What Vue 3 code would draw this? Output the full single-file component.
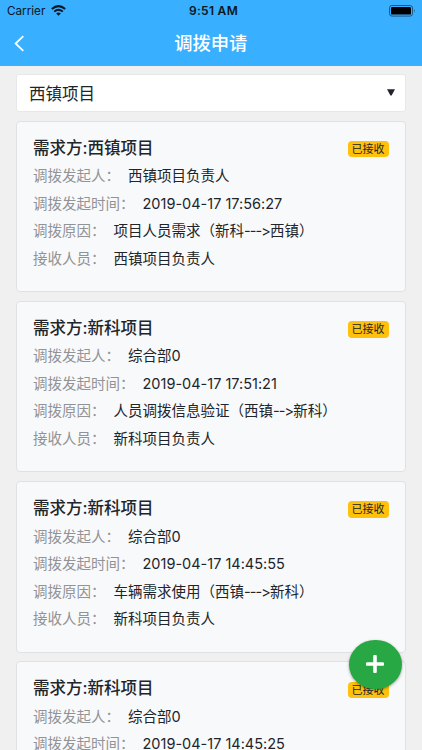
<script setup>
const cards = [
  { party: '西镇项目', rows: [['调拨发起人', '西镇项目负责人'], ['调拨发起时间', '2019-04-17 17:56:27'], ['调拨原因', '项目人员需求（新科--->西镇）'], ['接收人员', '西镇项目负责人']] },
  { party: '新科项目', rows: [['调拨发起人', '综合部0'], ['调拨发起时间', '2019-04-17 17:51:21'], ['调拨原因', '人员调拨信息验证（西镇-->新科）'], ['接收人员', '新科项目负责人']] },
  { party: '新科项目', rows: [['调拨发起人', '综合部0'], ['调拨发起时间', '2019-04-17 14:45:55'], ['调拨原因', '车辆需求使用（西镇--->新科）'], ['接收人员', '新科项目负责人']] },
  { party: '新科项目', rows: [['调拨发起人', '综合部0'], ['调拨发起时间', '2019-04-17 14:45:25']] },
]

// Splits a value so that its "-->" arrow can be set tighter than the rest.
const parts = (text) => text.split(/(-+>)/)
</script>

<template>
  <div class="screen" lang="zh-CN">
    <header class="top">
      <div class="status">
        <div class="carrier">
          <span>Carrier</span>
          <svg class="wifi" viewBox="0 0 15 11">
            <path d="M.8 4.1Q7.5-1.9 14.2 4.1" fill="none" stroke="#0b1722" stroke-width="2" />
            <path d="M3.2 6.6Q7.5 2.7 11.8 6.6" fill="none" stroke="#0b1722" stroke-width="1.9" />
            <path d="M5.2 8.4Q7.5 6.5 9.8 8.4L7.5 10.8Z" fill="#0b1722" />
          </svg>
        </div>
        <div class="clock">9:51 AM</div>
        <svg class="battery" viewBox="0 0 27 12">
          <rect x=".5" y=".5" width="23" height="10.6" rx="2.4" fill="none" stroke="#1d5680" />
          <rect x="2" y="2" width="20" height="7.6" rx="1.2" fill="#000" />
          <path d="M25 4.1Q26.6 5.8 25 7.5Z" fill="#1d5680" />
        </svg>
      </div>
      <div class="nav">
        <svg class="back" viewBox="0 0 11 17"><path d="M9.3 1.2 1.6 8.5 9.3 15.8" fill="none" stroke="#fff" stroke-width="1.8" /></svg>
        <h1>调拨申请</h1>
      </div>
    </header>
    <main>
      <div class="select">
        <span>西镇项目</span>
        <svg class="arrow" viewBox="0 0 8 7"><path d="M0 .3H8L4.6 6.5H3.4Z" fill="#212529" /></svg>
      </div>
      <section v-for="(card, i) in cards" :key="i" class="card">
        <div class="head">
          <h2>需求方:{{ card.party }}</h2>
          <span class="badge">已接收</span>
        </div>
        <div v-for="row in card.rows" :key="row[0]" class="row">
          <span class="label">{{ row[0] }}：</span>
          <span class="value"><span v-for="(part, j) in parts(row[1])" :key="j" :class="{ tight: j % 2 }">{{ part }}</span></span>
        </div>
      </section>
    </main>
    <button class="add" aria-label="添加">
      <svg viewBox="0 0 18 18"><path d="M9 1.5V16.5M1.5 9H16.5" stroke="#fff" stroke-width="3.6" stroke-linecap="round" /></svg>
    </button>
  </div>
</template>

<style>
body {
  margin: 0;
  overflow: hidden;
}
</style>

<style scoped>
.screen {
  position: relative;
  width: 422px;
  height: 750px;
  overflow: hidden;
  background: #f0f0f1;
  color: #212529;
  font-family: Inter, "Noto Sans CJK SC", sans-serif;
  font-feature-settings: "calt" 0;
}
.top {
  height: 65.6px;
  background: #38afff;
}
.status {
  display: grid;
  grid-template-columns: 1fr auto 1fr;
  align-items: center;
  height: 21px;
  padding: 0 6px 0 7px;
  color: #0b1722;
  font-size: 11.7px;
}
.carrier {
  display: flex;
  align-items: center;
  gap: 6px;
}
.wifi {
  width: 15px;
  height: 11px;
}
.clock {
  padding-left: 4px;
  font-size: 12px;
  font-weight: 600;
  letter-spacing: .3px;
}
.battery {
  width: 27px;
  height: 12px;
  justify-self: end;
}
.nav {
  display: grid;
  grid-template-columns: 1fr auto 1fr;
  align-items: center;
  height: 44px;
  padding: 0 14px 0 13.5px;
}
.back {
  width: 11px;
  height: 17px;
}
h1 {
  margin: 0;
  color: #fff;
  font-size: 18.3px;
  font-weight: 500;
  line-height: 43px;
}
main {
  display: flex;
  flex-direction: column;
  gap: 8.8px;
  padding: 8.6px 16px 0;
}
.select {
  display: flex;
  align-items: center;
  justify-content: space-between;
  box-sizing: border-box;
  height: 37.6px;
  padding: 0 10px 0 12px;
  border: 1px solid #e7e8ea;
  border-radius: 3px;
  background: #fff;
  font-size: 16.5px;
}
.arrow {
  width: 8px;
  height: 7px;
}
.card {
  flex: none;
  box-sizing: border-box;
  height: 171.5px;
  padding: 11.5px 16.5px 0 16px;
  border: 1px solid #e0e1e4;
  border-radius: 4px;
  background: #f8f9fb;
}
.head {
  display: flex;
  align-items: center;
  justify-content: space-between;
  height: 29px;
}
h2 {
  margin: -2px 0 0;
  font-size: 16.5px;
  font-weight: 500;
}
.badge {
  width: 41px;
  height: 16.5px;
  margin-top: 3px;
  border-radius: 4px;
  background: #ffc10b;
  font-size: 11px;
  line-height: 16px;
  text-align: center;
}
.row {
  display: flex;
  gap: 8px;
  height: 27.5px;
  font-size: 14.5px;
  line-height: 27.5px;
  white-space: nowrap;
}
.label {
  color: #929396;
}
.tight {
  letter-spacing: -.9px;
}
.add {
  position: absolute;
  left: 349px;
  top: 639.5px;
  display: grid;
  place-items: center;
  width: 52.5px;
  height: 49.3px;
  padding: 0;
  border: 0;
  border-radius: 50%;
  background: #28a745;
  box-shadow: 0 1px 3px rgba(0, 0, 0, .35);
}
.add svg {
  width: 18px;
  height: 18px;
}
</style>
